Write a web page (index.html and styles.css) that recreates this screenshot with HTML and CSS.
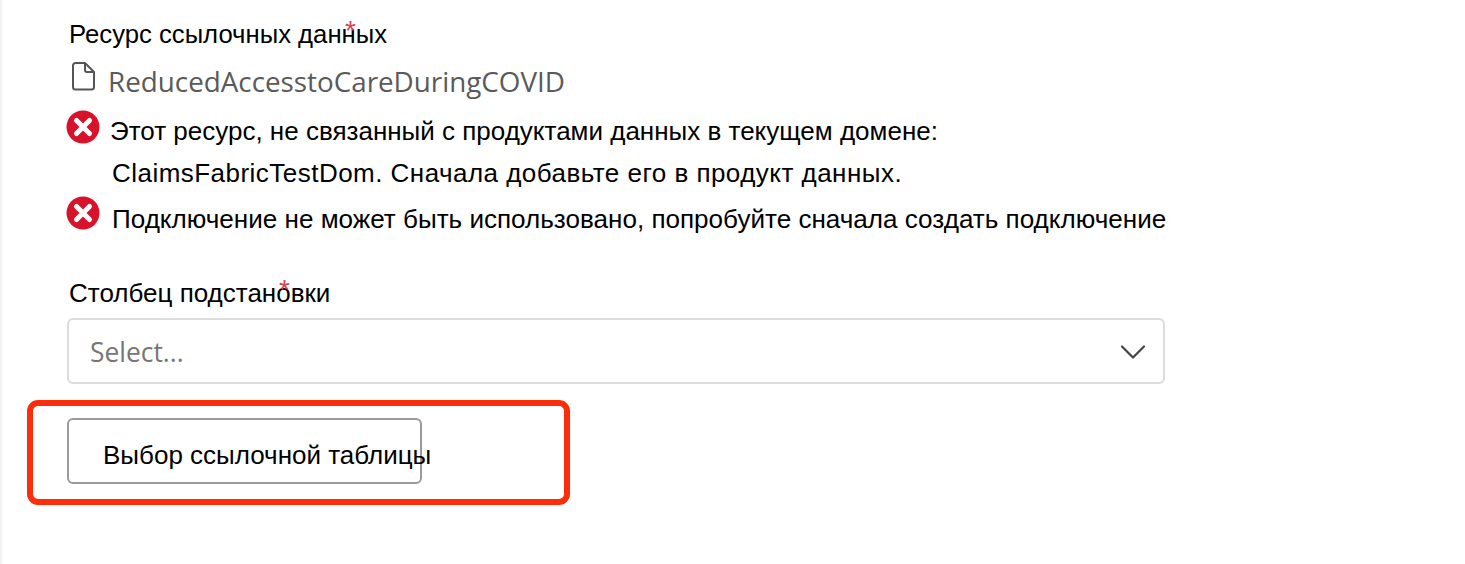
FILE: index.html
```html
<!DOCTYPE html>
<html lang="en">
<head>
  <meta charset="UTF-8" />
  <meta name="viewport" content="width=device-width, initial-scale=1.0" />
  <title>Ресурс ссылочных данных</title>
  <link rel="stylesheet" href="styles.css">
</head>
<body>
  <div id="panel">
    <div class="field-label">Ресурс ссылочных данных<span class="req req-first">*</span></div>
    <div id="resource">
      <svg class="file-icon" width="25" height="29" viewBox="0 0 25 29" fill="none" stroke="#555" stroke-width="2" stroke-linejoin="round">
        <path d="M2 3.500a2.500 2.500 0 0 1 2.500-2.500h9.500l9 9v15a2.500 2.500 0 0 1-2.500 2.500h-16a2.500 2.500 0 0 1-2.500-2.500z" />
        <path d="M14 1.500v6.500a2 2 0 0 0 2 2h6.500" />
      </svg>
      <span id="resourceName">ReducedAccesstoCareDuringCOVID</span>
    </div>
    <div class="error error-long">
      <svg class="error-icon" width="34" height="34" viewBox="0 0 34 34">
        <circle cx="17" cy="17" r="16.500" fill="#d8122a" />
        <path d="M10.500 10.500l13 13M23.500 10.500l-13 13" stroke="#fff" stroke-width="5" stroke-linecap="round" />
      </svg>
      <div class="error-text">
        <div class="error-line">Этот ресурс, не связанный с продуктами данных в текущем домене:</div>
        <div class="error-line error-line-second">ClaimsFabricTestDom. Сначала добавьте его в продукт данных.</div>
      </div>
    </div>
    <div class="error error-short">
      <svg class="error-icon" width="34" height="34" viewBox="0 0 34 34">
        <circle cx="17" cy="17" r="16.500" fill="#d8122a" />
        <path d="M10.500 10.500l13 13M23.500 10.500l-13 13" stroke="#fff" stroke-width="5" stroke-linecap="round" />
      </svg>
      <div class="error-line">Подключение не может быть использовано, попробуйте сначала создать подключение</div>
    </div>
    <div class="field-label field-label-second">Столбец подстановки<span class="req req-second">*</span></div>
    <div id="select">
      <span id="placeholder">Select...</span>
      <svg width="26" height="16" viewBox="0 0 26 16" fill="none" stroke="#444" stroke-width="2.200" stroke-linecap="round" stroke-linejoin="round">
        <path d="M2 2.500l11 11 11-11" />
      </svg>
    </div>
    <div id="highlight">
      <button id="pickBtn">Выбор ссылочной таблицы</button>
    </div>
  </div>
</body>
</html>
```

FILE: styles.css
```css
body {
  margin: 0;
  background-color: white;
  font-family: "Liberation Sans", Arial, sans-serif;
  color: #000;
}
#panel {
  height: 564px;
  box-sizing: border-box;
  padding: 17px 0 0 67px;
  background: linear-gradient(to right, #f0f0f0, #fff 4px);
  overflow: hidden;
}
.field-label {
  position: relative;
  width: max-content;
  margin-left: 2px;
  font-size: 25.700px;
  line-height: 34px;
}
.field-label-second {
  margin-top: 40px;
  font-size: 26px;
}
.req {
  position: absolute;
  top: 0;
  color: #d9434f;
  font-size: 28px;
  line-height: 28px;
}
.req-first { left: 276px; }
.req-second { left: 210px; }
#resource {
  display: flex;
  align-items: flex-start;
  margin-top: 9px;
  height: 42px;
}
.file-icon {
  margin-left: 4px;
  margin-top: 2px;
}
#resourceName {
  margin-left: 12px;
  font-family: "Open Sans", sans-serif;
  font-size: 27.800px;
  line-height: 42px;
  color: #5a5a5a;
}
.error {
  display: flex;
  align-items: flex-start;
  margin-left: -1px;
}
.error-long { margin-top: 8px; }
.error-short { margin-top: 6px; }
.error-icon {
  flex: none;
}
.error-text {
  display: flex;
  flex-direction: column;
}
.error-line {
  margin-left: 10px;
  margin-top: 4px;
  font-size: 26px;
  line-height: 34px;
}
.error-line-second {
  margin-left: 12px;
  margin-top: 8px;
  letter-spacing: 0.470px;
}
.error-short .error-line {
  margin-left: 12px;
  margin-top: 6px;
  font-size: 26.070px;
}
#select {
  display: flex;
  align-items: center;
  justify-content: space-between;
  box-sizing: border-box;
  width: 1098px;
  height: 66px;
  margin-top: 8px;
  padding: 2px 17px 0 21px;
  border: 2px solid #dcdcdc;
  border-radius: 6px;
}
#placeholder {
  font-family: "Open Sans", sans-serif;
  font-size: 26.400px;
  color: #767676;
}
#highlight {
  box-sizing: border-box;
  width: 543px;
  height: 105px;
  margin: 16px 0 0 -40px;
  padding: 12px 0 0 34px;
  border: 6px solid #fb2d0a;
  border-radius: 11px;
}
#pickBtn {
  display: block;
  box-sizing: border-box;
  width: 355px;
  height: 66px;
  padding: 8px 0 0 34px;
  border: 2px solid #9a9a9a;
  border-radius: 6px;
  background: none;
  font-family: inherit;
  font-size: 26px;
  color: #000;
  text-align: left;
  white-space: nowrap;
}
```
